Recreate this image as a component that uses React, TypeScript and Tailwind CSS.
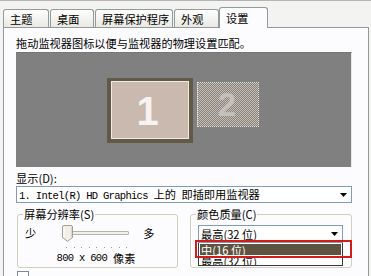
import React from "react";

const cjk = "font-['Noto_Sans_CJK_SC',sans-serif] text-[11.2px] leading-[12px] text-black";
const mono = "font-['Liberation_Mono','Noto_Sans_CJK_SC',monospace] text-[10.5px] tracking-[-0.7px]";

function Tab({ label, w, selected }: { label: string; w: string; selected?: boolean }) {
  if (selected) {
    return (
      <div
        className={`relative z-10 -ml-[1px] ${w} h-[21px] border border-b-0 border-[#919b9c] rounded-t-[3px] bg-[#fcfcfe] pl-[6px] pt-[4px] ${cjk}`}
      >
        {label}
      </div>
    );
  }
  return (
    <div
      className={`${w} h-[18px] mb-[1px] mr-[1px] border border-b-0 border-[#919b9c] rounded-t-[3px] bg-gradient-to-b from-[#ffffff] to-[#e9e8e2] pl-[6px] pt-[3px] ${cjk}`}
    >
      {label}
    </div>
  );
}

function Arrow() {
  return (
    <svg width="7" height="4" viewBox="0 0 7 4">
      <path d="M0 0 H7 L3.5 4 Z" fill="#000" />
    </svg>
  );
}

export default function App() {
  const dots = Array.from({ length: 9 });
  return (
    <div className="w-[371px] h-[276px] overflow-hidden bg-[#f3f3f1] border-t border-[#b4b4b4]">
      {/* tabs */}
      <div className="flex items-end pl-[3px] pt-[6px] -mb-[1px]">
        <Tab label="主题" w="w-[46px]" />
        <Tab label="桌面" w="w-[44px]" />
        <Tab label="屏幕保护程序" w="w-[78px]" />
        <Tab label="外观" w="w-[45px]" />
        <Tab label="设置" w="w-[49px]" selected />
      </div>

      {/* panel */}
      <div className="ml-[3px] w-[366px] h-[260px] border border-[#919b9c] bg-[#fcfcfe] pl-[12px] pt-[9px]">
        <div className={cjk}>拖动监视器图标以便与监视器的物理设置匹配。</div>

        {/* monitor canvas */}
        <div className="mt-[3px] w-[336px] h-[115px] bg-[#808080] border-t border-[#767676] border-r border-r-[#e8e8e8] flex items-start pl-[91px] pt-[25px] gap-[4px]">
          <div className="w-[86px] h-[65px] bg-[#625949] px-[4px] pt-[3px] pb-[4px]">
            <div className="w-full h-full border border-[#f1ebdd] bg-[#c9b9ae] flex items-center justify-center">
              <span className="font-['Liberation_Sans',sans-serif] font-bold text-[40px] leading-none text-[#f6f3f1] -ml-[5px] mt-[2px]">
                1
              </span>
            </div>
          </div>
          <div className="mt-[4px] w-[62px] h-[45px] border border-dotted border-[#e4e4e4] bg-[repeating-conic-gradient(#c6bdb3_0%_25%,#858280_0%_50%)] bg-[length:2px_2px] flex items-center justify-center">
            <span className="font-['Liberation_Sans',sans-serif] font-bold text-[33px] leading-none text-[#c4c0bc] -ml-[2px]">
              2
            </span>
          </div>
        </div>

        {/* display label + dropdown */}
        <div className={`mt-[5px] ${cjk}`}>显示(D):</div>
        <div className="mt-[2px] w-[336px] h-[17px] border border-[#7f9db9] bg-white flex items-center pl-[2px] pr-[4px]">
          <span className="flex-1 whitespace-pre leading-[12px]">
            <span className={mono}>1. Intel(R) HD Graphics </span>
            <span className={cjk}>上的</span>
            <span className={mono}> </span>
            <span className={cjk}>即插即用监视器</span>
          </span>
          <Arrow />
        </div>

        {/* groupboxes */}
        <div className="mt-[5px] flex items-stretch gap-[12px] ml-[1px]">
          <fieldset className="w-[161px] border border-[#d0d0bf] rounded-[3px] p-0 m-0">
            <legend className={`ml-[5px] px-[1px] ${cjk}`}>屏幕分辨率(S)</legend>
            <div className="mt-[4px] h-[18px] flex items-center pl-[7px]">
              <span className={cjk}>少</span>
              <div className="relative ml-[26px] w-[67px] h-[18px] flex items-center">
                <div className="w-full h-[4px] border border-[#b4b4aa] bg-[#f0efe8] rounded-[1px]" />
                <svg className="absolute left-0 top-[1px]" width="11" height="17" viewBox="0 0 11 17">
                  <path
                    d="M2 0.5 H9 A1.5 1.5 0 0 1 10.5 2 V12.5 L5.5 16.3 L0.5 12.5 V2 A1.5 1.5 0 0 1 2 0.5 Z"
                    fill="#f1efe8"
                    stroke="#a09f95"
                  />
                  <path d="M2 2 V12" stroke="#ffffff" />
                  <path d="M9.3 2 V12" stroke="#d6d3c8" />
                </svg>
              </div>
              <span className={`ml-[14px] ${cjk}`}>多</span>
            </div>
            <div className="mt-[5px] ml-[48px] w-[61px] h-[1px] flex justify-between">
              {dots.map((_, i) => (
                <div key={i} className="w-[1px] h-[1px] bg-[#9a9a9a]" />
              ))}
            </div>
            <div className="mt-[4px] pb-[3px] flex justify-center whitespace-pre leading-[12px] -ml-[3px]">
              <span className={mono}>800 x 600</span>
              <span className={`ml-[6px] ${cjk}`}>像素</span>
            </div>
          </fieldset>

          <fieldset className="w-[162px] border border-[#d0d0bf] rounded-[3px] p-0 m-0">
            <legend className={`ml-[5px] px-[1px] ${cjk}`}>颜色质量(C)</legend>
            <div className="relative mt-[5px] ml-[7px] w-[145px] h-[18px] border border-[#7f9db9] bg-white flex items-center pl-[2px] pr-[4px]">
              <span className={`flex-1 ${cjk}`}>最高(32 位)</span>
              <Arrow />
              {/* dropped list */}
              <div className="absolute left-[-1px] top-[17px] w-[145px] h-[23px] border border-[#3a3a3a] border-t-0 bg-white overflow-hidden px-[1px] pt-[1px]">
                <div className={`h-[11px] bg-[#5e5340] pl-[1px] ${cjk} leading-[11px]`}>
                  <span className="text-white">中(16 位)</span>
                </div>
                <div className={`pl-[1px] ${cjk}`}>最高(32 位)</div>
              </div>
              {/* red highlight */}
              <div className="absolute left-[-4px] top-[14px] w-[157px] h-[18px] border-2 border-[#d21b1b]" />
            </div>
          </fieldset>
        </div>

        <div className="mt-[3px] ml-[1px] w-[12px] h-[12px] border border-[#7a8a99] bg-white" />
      </div>
    </div>
  );
}
